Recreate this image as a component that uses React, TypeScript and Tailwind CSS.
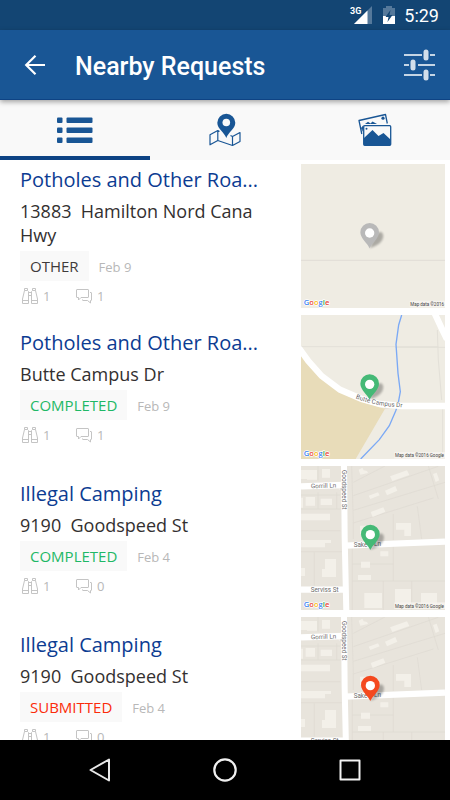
import React from "react";

type Status = "OTHER" | "COMPLETED" | "SUBMITTED";

interface Request {
  id: number;
  title: string;
  address: string;
  status: Status;
  date: string;
  watchers: number;
  comments: number;
  map: "field" | "campus" | "street";
}

const requests: Request[] = [
  { id: 1, title: "Potholes and Other Roa...", address: "13883  Hamilton Nord Cana Hwy", status: "OTHER", date: "Feb 9", watchers: 1, comments: 1, map: "field" },
  { id: 2, title: "Potholes and Other Roa...", address: "Butte Campus Dr", status: "COMPLETED", date: "Feb 9", watchers: 1, comments: 1, map: "campus" },
  { id: 3, title: "Illegal Camping", address: "9190  Goodspeed St", status: "COMPLETED", date: "Feb 4", watchers: 1, comments: 0, map: "street" },
  { id: 4, title: "Illegal Camping", address: "9190  Goodspeed St", status: "SUBMITTED", date: "Feb 4", watchers: 1, comments: 0, map: "street" },
];

const statusText: Record<Status, string> = {
  OTHER: "text-[#3f3b3b]",
  COMPLETED: "text-[#1fb866]",
  SUBMITTED: "text-[#fb2b0a]",
};

const pinColor: Record<Status, string> = {
  OTHER: "#b9b9b9",
  COMPLETED: "#45b976",
  SUBMITTED: "#f4491f",
};

function Pin({ x, y, color }: { x: number; y: number; color: string }) {
  return (
    <g transform={`translate(${x} ${y})`}>
      <path d="M0 0 C6 -14 18 -48 32 -50 C46 -46 42 -24 28 -14 C18 -7 8 -3 0 0Z" fill="#000" opacity=".28" style={{ filter: "blur(3px)" }} />
      <path d="M0 0 C-6 -14 -28 -30 -28 -48 A28 28 0 0 1 28 -48 C28 -30 6 -14 0 0Z" fill={color} />
      <circle cx="0" cy="-46" r="14" fill="#fff" />
    </g>
  );
}

function Attribution({ y, text }: { y: number; text: string }) {
  const short = text.length < 16;
  return (
    <g>
      <rect x={short ? 344 : 298} y={y - 16} width={short ? 106 : 152} height="20" fill="#f7f5f0" opacity=".8" />
      <text x="447" y={y} textAnchor="end" fontSize="13.500" fill="#444" className="font-['Roboto',sans-serif]">{text}</text>
      <text x="26" y={y - 3} fontSize="23" fontWeight="600" stroke="#fff" strokeWidth="4" paintOrder="stroke" className="font-['Open_Sans',sans-serif]">
        <tspan fill="#4285f4">G</tspan>
        <tspan fill="#ea4335">o</tspan>
        <tspan fill="#fbbc05">o</tspan>
        <tspan fill="#4285f4">g</tspan>
        <tspan fill="#34a853">l</tspan>
        <tspan fill="#ea4335">e</tspan>
      </text>
    </g>
  );
}

function FieldMap({ color }: { color: string }) {
  return (
    <svg viewBox="18 12 432 432" className="block size-36" role="img" aria-label="Map">
      <rect x="18" y="12" width="432" height="432" fill="#efece3" />
      <path d="M18 301H450" stroke="#e0ddd5" strokeWidth="3" />
      <Pin x={224} y={265} color={color} />
      <Attribution y={438} text="Map data ©2016" />
    </svg>
  );
}

function CampusMap({ color }: { color: string }) {
  return (
    <svg viewBox="18 15 432 432" className="block size-36" role="img" aria-label="Map">
      <rect x="18" y="15" width="432" height="432" fill="#efece3" />
      <path d="M18 110H430M300 112H450M427 60L430 150L440 270M443 295V447M300 290L268 296" stroke="#e3e0d8" strokeWidth="3" fill="none" />
      <path d="M18 125L60 180L135 245L200 275L270 296L182 447H18Z" fill="#e8dcb9" />
      <path d="M320 15L311 45L303 103L309 190L316 245L309 283L302 303L283 347L253 389L197 447" stroke="#7ba9f5" strokeWidth="4" fill="none" />
      <path d="M12 114L40 153L80 198L135 239L200 267L255 282L320 288H455" stroke="#fff" strokeWidth="19" fill="none" />
      <path d="M418 8L440 55L456 88" stroke="#fff" strokeWidth="19" fill="none" />
      <path id="campus-road" d="M182 265Q245 291 336 292" fill="none" />
      <text fontSize="19" fill="#666" stroke="#fff" strokeWidth="3" paintOrder="stroke" className="font-['Roboto',sans-serif]">
        <textPath href="#campus-road">Butte Campus Dr</textPath>
      </text>
      <Pin x={224} y={269} color={color} />
      <Attribution y={442} text="Map data ©2016 Google" />
    </svg>
  );
}

function StreetMap({ color }: { color: string }) {
  return (
    <svg viewBox="18 21 432 432" className="block size-36" role="img" aria-label="Map">
      <rect x="18" y="21" width="432" height="432" fill="#e8e4dc" />
      <g stroke="#dedad2" strokeWidth="2" fill="none">
        <path d="M69 21V65M18 108H136M69 100V150M125 100V150M18 150H136M18 215H136M18 278H140M58 280V380M170 21L175 190V240M175 70L270 21M175 110L430 22M175 154L450 70M175 192L415 117M400 21L430 120M295 165V243M367 142L380 240M295 262V366M172 315H295M172 366H450M265 366V453M350 366V453M172 265V453" />
      </g>
      <g fill="#f3f0e9">
        <path d="M18 33H37V60H18ZM36 33H66V62H36ZM81 30H105V56H81ZM18 116H24V146H18ZM32 114H60V140H32ZM77 119H111V138H77ZM18 164H105V184H18ZM18 243H108V252H90V265H18ZM90 300H123V354H81V330H90ZM18 327H30V351H18Z" />
        <path d="M191 32L202 26L206 34L216 36L219 42L196 47ZM285 52L336 34L343 48L292 66ZM414 45L425 41L433 64L422 69ZM270 95L301 81L307 95L276 109ZM221 110L249 100L254 109L226 120ZM227 159L265 145L271 158L233 174ZM195 200H217V225H195ZM303 192H348V231H328V212H303ZM256 277H280V292H256ZM198 308H225V326H198ZM189 348H228V363H189ZM208 402H261V447H208ZM300 390H348V442H300ZM378 402H426V440H378Z" />
      </g>
      <g stroke="#fff" fill="none">
        <path d="M18 82L145 78" strokeWidth="19" />
        <path d="M147 15L149 235L154 460" strokeWidth="18" />
        <path d="M150 260L450 248" strokeWidth="19" />
        <path d="M18 392H150" strokeWidth="19" />
      </g>
      <g fontSize="19" fill="#6b6b6b" stroke="#fff" strokeWidth="3" paintOrder="stroke" className="font-['Roboto',sans-serif]">
        <text x="48" y="88" transform="rotate(-2 48 88)">Gorrill Ln</text>
        <text x="47" y="399">Serviss St</text>
        <text x="176" y="264">Sake</text>
        <text x="237" y="262">Ln</text>
        <text transform="translate(142 33) rotate(90)">Goodspeed St</text>
      </g>
      <Pin x={226} y={273} color={color} />
      <Attribution y={446} text="Map data ©2016 Google" />
    </svg>
  );
}

const maps = { field: FieldMap, campus: CampusMap, street: StreetMap };

function BinocularsIcon() {
  return (
    <svg viewBox="0 0 18 18" className="h-[18px] w-[18px]" fill="none" stroke="#c4c4c4" aria-hidden="true">
      <path d="M3.500 3.500L1.500 12V16.500H7.500V4.500L6.500 3.500ZM3.500 3.500V1.500H6.500V3.500M14.500 3.500L16.500 12V16.500H10.500V4.500L11.500 3.500ZM14.500 3.500V1.500H11.500V3.500M1.500 13.500H7.500M10.500 13.500H16.500M7.500 5.500H10.500M7.500 8.500H10.500" />
    </svg>
  );
}

function CommentsIcon() {
  return (
    <svg viewBox="0 0 18 18" className="h-[18px] w-[18px]" fill="none" stroke="#c4c4c4" aria-hidden="true">
      <path d="M2 2.500H13Q13.500 2.500 13.500 3V10Q13.500 10.500 13 10.500H6L3.500 13V10.500H2Q1.500 10.500 1.500 10V3Q1.500 2.500 2 2.500ZM15 5.500H16Q16.500 5.500 16.500 6V13Q16.500 13.500 16 13.500H15.500V16L12.500 13.500H8Q7.500 13.500 7.500 13V12.500" />
    </svg>
  );
}

function RequestRow({ request }: { request: Request }) {
  const MapView = maps[request.map];
  return (
    <li className="flex items-center gap-5 pr-[5px] pl-5">
      <div className="min-w-0 flex-1">
        <h2 className="truncate text-[20px] leading-7 text-[#0c3c92]">{request.title}</h2>
        <p className="mt-[5px] text-[18px] leading-6 whitespace-pre-wrap text-[#333030]">{request.address}</p>
        <div className="mt-1 flex items-center gap-[10px]">
          <span className={`bg-[#f9f9f9] px-[10px] text-[15px] leading-[30px] font-medium ${statusText[request.status]}`}>{request.status}</span>
          <time className="pt-0.5 text-[13px] leading-5 text-[#b8b8b8]">{request.date}</time>
        </div>
        <div className="mt-[5px] flex h-5 items-center gap-6 pl-px text-[13px] leading-5 text-[#b8b8b8]">
          <span className="flex w-[30px] items-center gap-1"><BinocularsIcon />{request.watchers}</span>
          <span className="flex items-center gap-1"><CommentsIcon />{request.comments}</span>
        </div>
      </div>
      <MapView color={pinColor[request.status]} />
    </li>
  );
}

function StatusBar() {
  return (
    <div className="flex h-[30px] shrink-0 items-center justify-end bg-[#134573] pr-[11px] text-white">
      <svg viewBox="0 0 24 20" className="h-5 w-6" aria-label="3G signal">
        <path d="M23 1V19H5Z" fill="#55799b" />
        <path d="M18.500 5.500V19H5Z" fill="#fff" />
        <text x="1" y="8.500" fontSize="9" fontWeight="700" fill="#fff" className="font-['Roboto',sans-serif]">3G</text>
      </svg>
      <svg viewBox="0 0 14 20" className="ml-[9px] h-5 w-[14px]" aria-label="Battery charging">
        <path d="M4 1H10V3H13V11H1V3H4Z" fill="#55799b" />
        <path d="M1 11H13V19H1Z" fill="#fff" />
        <path d="M8.500 5L3.500 12H6.500L5.500 17L10.500 10H7.500Z" fill="#134573" />
      </svg>
      <span className="ml-2 pt-0.5 text-[18px] leading-7">5:29</span>
    </div>
  );
}

function AppBar() {
  return (
    <header className="relative z-10 flex h-[70px] shrink-0 items-center border-b border-[#0e4384] bg-[#195695] pr-[14px] pl-[24px] text-white shadow-[0_2px_5px_rgba(0,0,0,0.35)]">
      <button type="button" aria-label="Back">
        <svg viewBox="0 0 22 22" className="size-[22px]" fill="none" stroke="#fff" strokeWidth="2.200" aria-hidden="true">
          <path d="M21 11H2.500M11.500 1.700L2.200 11L11.500 20.300" />
        </svg>
      </button>
      <h1 className="ml-[29px] flex-1 pt-1 text-[25px] leading-8 font-medium">Nearby Requests</h1>
      <button type="button" aria-label="Filter">
        <svg viewBox="0 0 32 32" className="size-8" aria-hidden="true">
          <path d="M0 6H18M26 6H31M0 16H5M14 16H31M0 26H18M26 26H31" stroke="#c5d5e5" strokeWidth="2" />
          <g fill="#d3dfeb">
            <rect x="19.500" y="0.500" width="5" height="11" rx="2.500" />
            <rect x="6.500" y="10.500" width="5" height="11" rx="2.500" />
            <rect x="19.500" y="20.500" width="5" height="11" rx="2.500" />
          </g>
        </svg>
      </button>
    </header>
  );
}

function Tabs() {
  return (
    <div role="tablist" className="grid h-[60px] shrink-0 grid-cols-3 bg-[#f9f9f9]">
      <button type="button" role="tab" aria-selected="true" aria-label="List" className="flex items-center justify-center border-b-4 border-[#0e4384] pt-1">
        <svg viewBox="0 0 36 27" className="h-[27px] w-9" fill="#195695" aria-hidden="true">
          <rect x="0" y="0.500" width="5.500" height="5.500" rx="1" />
          <rect x="0" y="10.500" width="5.500" height="5.500" rx="1" />
          <rect x="0" y="20.500" width="5.500" height="5.500" rx="1" />
          <rect x="9.500" y="0.500" width="26" height="5.500" rx="1" />
          <rect x="9.500" y="10.500" width="26" height="5.500" rx="1" />
          <rect x="9.500" y="20.500" width="26" height="5.500" rx="1" />
        </svg>
      </button>
      <button type="button" role="tab" aria-selected="false" aria-label="Map" className="flex items-center justify-center">
        <svg viewBox="0 0 32 34" className="h-[34px] w-8" aria-hidden="true">
          <path d="M10.500 18.500L8.800 17.500L1 21.800V31.800L8.800 27.500L23.500 32.500L31 28.500V19.500L23.500 23.500L21.500 22.500M8.800 17.500V27.500M23.500 23.500V32.500" fill="none" stroke="#195695" strokeWidth="1.200" strokeLinejoin="round" />
          <path d="M17.300 25C15.500 19.500 8.300 16 8.300 9.800A9 9 0 0 1 26.300 9.800C26.300 16 19 19.500 17.300 25Z" fill="#195695" />
          <circle cx="17.300" cy="9.500" r="3.800" fill="#f9f9f9" />
        </svg>
      </button>
      <button type="button" role="tab" aria-selected="false" aria-label="Photos" className="flex items-center justify-center">
        <svg viewBox="0 0 34 34" className="size-[34px]" aria-hidden="true">
          <path d="M3.800 21L1 7.500L27.500 1.500L29.300 10.500" fill="none" stroke="#195695" strokeWidth="1.300" strokeLinejoin="round" />
          <path d="M3 15L5.500 12L4.500 19ZM7 11L10 8.800L12.500 10.500L14.500 8.500L19 11Z" fill="#195695" />
          <circle cx="25" cy="5.200" r="1.600" fill="#195695" />
          <rect x="5.700" y="12.700" width="27" height="19.600" rx="1" fill="#f9f9f9" stroke="#195695" strokeWidth="1.300" />
          <path d="M6 25L14.500 17L20.500 23L25.500 20L32.500 26.500V32H6Z" fill="#195695" />
          <circle cx="8.500" cy="15.800" r="1" fill="#195695" />
        </svg>
      </button>
    </div>
  );
}

function SystemNav() {
  return (
    <nav aria-label="System" className="flex h-[60px] shrink-0 items-center justify-center gap-[101px] bg-black">
      <button type="button" aria-label="Back">
        <svg viewBox="0 0 24 24" className="size-6" fill="none" stroke="#e8e8e8" strokeWidth="2" strokeLinejoin="round" aria-hidden="true">
          <path d="M21 1.500V22.500L2.500 12Z" />
        </svg>
      </button>
      <button type="button" aria-label="Home">
        <svg viewBox="0 0 24 24" className="size-6" fill="none" stroke="#f0f0f0" strokeWidth="2.200" aria-hidden="true">
          <circle cx="12" cy="12" r="10.700" />
        </svg>
      </button>
      <button type="button" aria-label="Recent apps">
        <svg viewBox="0 0 24 24" className="size-6" fill="none" stroke="#f0f0f0" strokeWidth="2" strokeLinejoin="round" aria-hidden="true">
          <rect x="2.500" y="2.500" width="19" height="19" />
        </svg>
      </button>
    </nav>
  );
}

export default function App() {
  return (
    <div className="flex h-screen flex-col overflow-hidden bg-white font-['Roboto',sans-serif]">
      <StatusBar />
      <AppBar />
      <Tabs />
      <main className="min-h-0 flex-1 overflow-hidden font-['Open_Sans',sans-serif]">
        <ul className="flex flex-col gap-[7px] pt-1">
          {requests.map((request) => (
            <RequestRow key={request.id} request={request} />
          ))}
        </ul>
      </main>
      <SystemNav />
    </div>
  );
}
